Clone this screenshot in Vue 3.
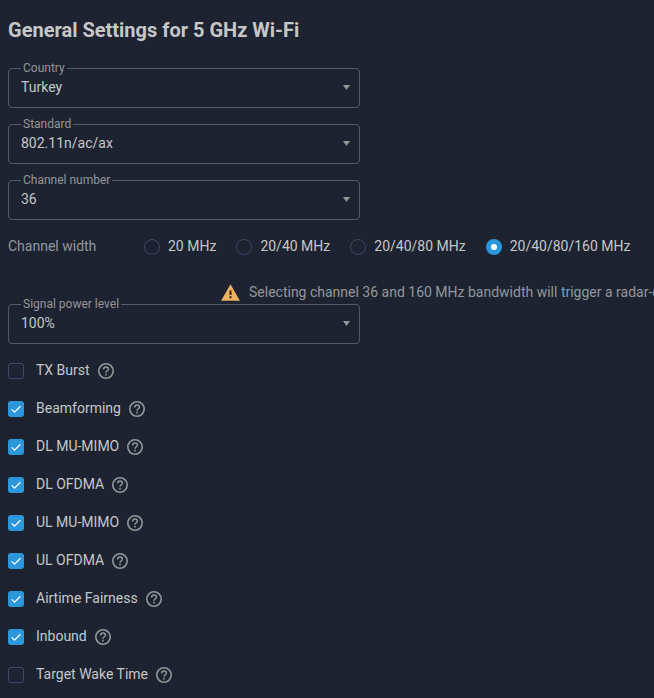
<script setup>
import { ref } from 'vue'

const selects = [
  { label: 'Country', value: 'Turkey' },
  { label: 'Standard', value: '802.11n/ac/ax' },
  { label: 'Channel number', value: '36' },
]
const power = [{ label: 'Signal power level', value: '100%' }]
const widths = ['20 MHz', '20/40 MHz', '20/40/80 MHz', '20/40/80/160 MHz']
const width = ref('20/40/80/160 MHz')
const options = ref([
  { label: 'TX Burst', on: false },
  { label: 'Beamforming', on: true },
  { label: 'DL MU-MIMO', on: true },
  { label: 'DL OFDMA', on: true },
  { label: 'UL MU-MIMO', on: true },
  { label: 'UL OFDMA', on: true },
  { label: 'Airtime Fairness', on: true },
  { label: 'Inbound', on: true },
  { label: 'Target Wake Time', on: false },
])
</script>

<template>
  <main class="page">
    <h1 class="title">General Settings for 5 GHz Wi-Fi</h1>

    <div class="selects">
      <fieldset v-for="s in selects" :key="s.label" class="select">
        <legend>{{ s.label }}</legend>
        <div class="value">
          <span>{{ s.value }}</span>
          <svg class="arrow" width="7" height="5" viewBox="0 0 7 5"><path d="M0 0H7L3.5 5Z" /></svg>
        </div>
      </fieldset>
    </div>

    <div class="width-row">
      <span class="width-label">Channel width</span>
      <div class="radios">
        <div v-for="w in widths" :key="w" class="radio" @click="width = w">
          <span class="circle" :class="{ on: w === width }"></span>
          <span>{{ w }}</span>
        </div>
      </div>
    </div>

    <div class="warning">
      <svg width="19" height="17" viewBox="0 0 19 17">
        <path d="M9.5 0.3L18.9 16.7H0.1Z" fill="#f2b061" />
        <path d="M8.5 6.5H10.5V11H8.5ZM8.5 12.3H10.5V14.3H8.5Z" fill="#1d2331" />
      </svg>
      <span>Selecting channel 36 and 160 MHz bandwidth will trigger a radar-c</span>
    </div>

    <fieldset v-for="s in power" :key="s.label" class="select">
      <legend>{{ s.label }}</legend>
      <div class="value">
        <span>{{ s.value }}</span>
        <svg class="arrow" width="7" height="5" viewBox="0 0 7 5"><path d="M0 0H7L3.5 5Z" /></svg>
      </div>
    </fieldset>

    <div class="checks">
      <div v-for="o in options" :key="o.label" class="check" @click="o.on = !o.on">
        <span class="box" :class="{ on: o.on }">
          <svg v-if="o.on" width="16" height="16" viewBox="0 0 16 16">
            <path d="M3.7 8.4L6.6 11.2L12.4 5.3" fill="none" stroke="#fff" stroke-width="1.3" />
          </svg>
        </span>
        <span class="check-label">{{ o.label }}</span>
        <svg class="help" width="16" height="16" viewBox="0 0 16 16" fill="none">
          <circle cx="8" cy="8" r="7.2" stroke="#949799" stroke-width="1.6" />
          <path d="M5.6 6.5C5.6 5 6.6 4.1 8 4.1C9.4 4.1 10.4 4.9 10.4 6.2C10.4 7.7 8 7.9 8 9.7" stroke="#949799" stroke-width="1.5" />
          <path d="M7.2 10.8H8.8V12.4H7.2Z" fill="#949799" />
        </svg>
      </div>
    </div>
  </main>
</template>

<style>
body {
  background: #1d2331;
}
</style>

<style scoped>
.page {
  box-sizing: border-box;
  height: 698px;
  padding: 16px 0 0 8px;
  overflow: hidden;
  background: #1d2331;
  color: #c6c7c8;
  font: 14px/20px Roboto, sans-serif;
}
.title {
  margin: 0 0 16px;
  font-size: 20px;
  line-height: 28px;
  font-weight: 700;
}
.selects {
  display: flex;
  flex-direction: column;
  gap: 8px;
}
.select {
  box-sizing: border-box;
  width: 352px;
  height: 48px;
  margin: 0;
  padding: 0 9px 0 12px;
  border: 1px solid #555a63;
  border-radius: 4px;
  min-width: 0;
}
.select legend {
  padding: 0 2px;
  color: #949799;
  font-size: 12px;
  line-height: 16px;
}
.value {
  display: flex;
  align-items: center;
  justify-content: space-between;
  height: 22px;
}
.arrow {
  fill: #949799;
}
.width-row {
  display: flex;
  align-items: center;
  height: 20px;
  margin-top: 16px;
}
.width-label {
  width: 136px;
  color: #949799;
}
.radios {
  display: flex;
  gap: 20px;
}
.radio {
  display: flex;
  align-items: center;
  gap: 8px;
  white-space: nowrap;
}
.circle {
  box-sizing: border-box;
  width: 16px;
  height: 16px;
  margin-top: 2px;
  border: 1px solid #3b4a67;
  border-radius: 50%;
}
.circle.on {
  border: 5px solid #2d97dc;
  background: #fff;
}
.warning {
  display: flex;
  align-items: center;
  gap: 9px;
  height: 20px;
  margin: 26px 0 -6px 213px;
  color: #949799;
  white-space: nowrap;
}
.warning svg {
  flex: none;
  margin-top: 1px;
}
.checks {
  display: flex;
  flex-direction: column;
  gap: 18px;
  margin-top: 16px;
}
.check {
  display: flex;
  align-items: center;
  height: 20px;
}
.box {
  box-sizing: border-box;
  display: flex;
  width: 16px;
  height: 16px;
  margin: 2px 12px 0 0;
  border: 1px solid #3b4a67;
  border-radius: 3px;
}
.box.on {
  border: 0;
  background: #2d97dc;
}
.help {
  margin: 2px 0 0 8px;
}
</style>
